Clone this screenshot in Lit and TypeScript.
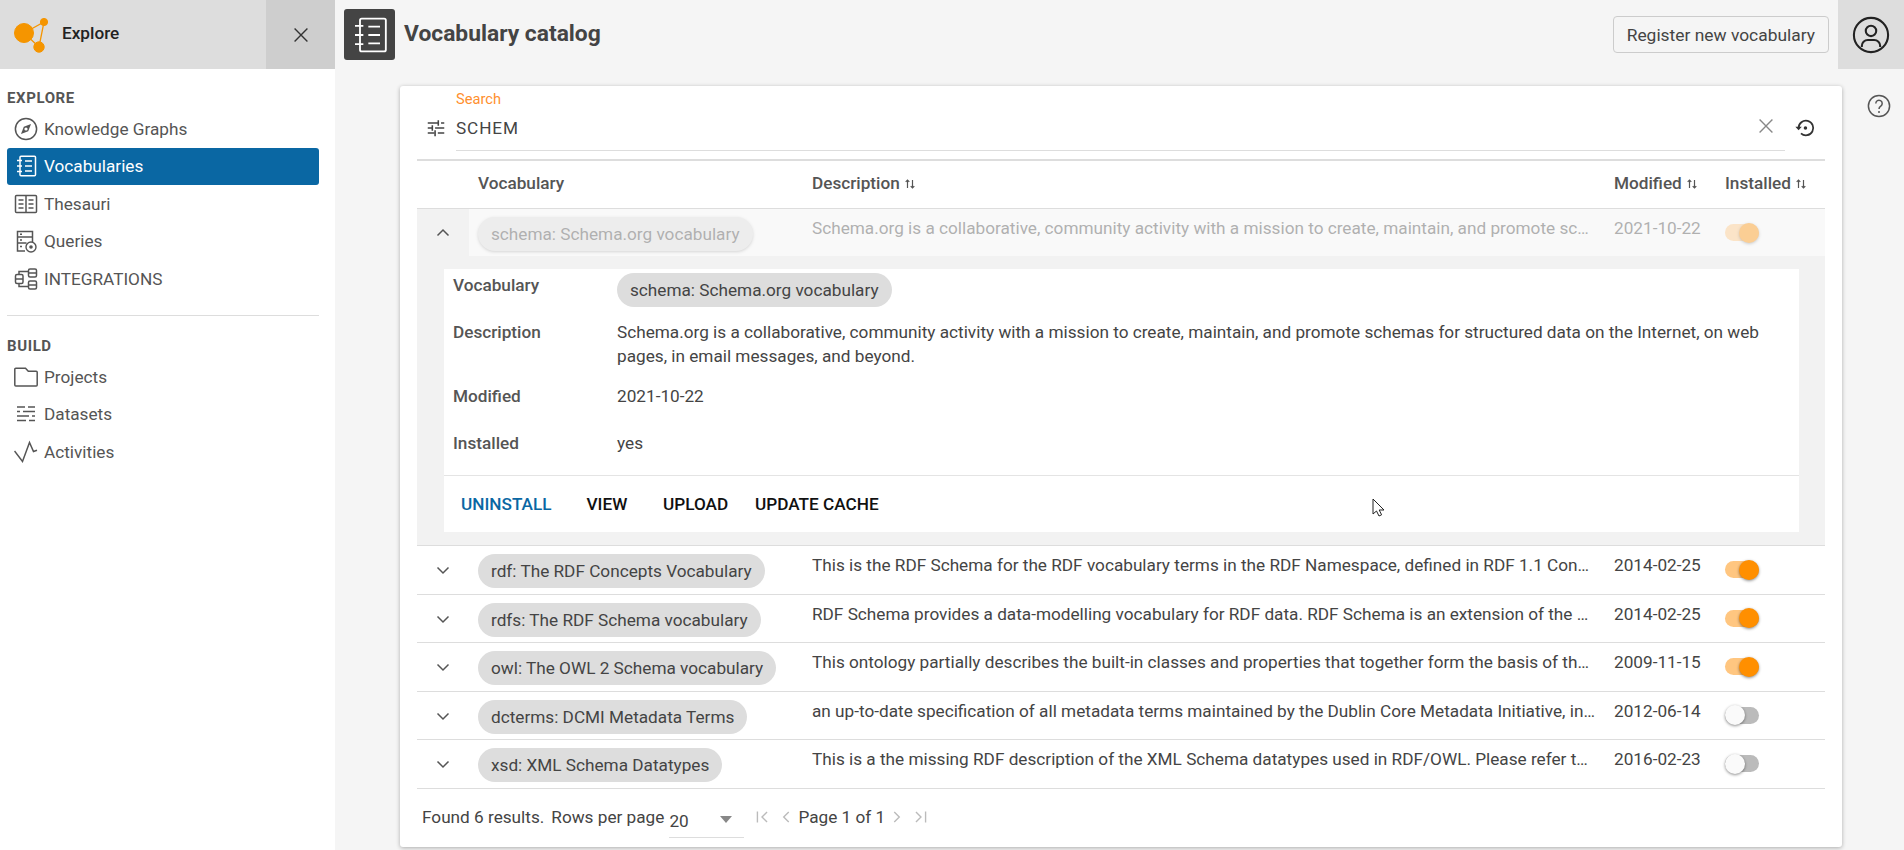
import { LitElement, html, css, svg } from 'lit';
import { customElement } from 'lit/decorators.js';

const stroke = (body: unknown, size = 24) => html`<svg class="icon" width=${size} height=${size} viewBox="0 0 24 24" fill="none" stroke="currentColor" stroke-width="1.5">${body}</svg>`;

const notebook = svg`<rect x="6" y="2.2" width="15.5" height="19.6" rx="1"/><path d="M3 6.5h5M3 12h5M3 17.5h5M11 7h7M11 12h7M11 17h7"/>`;
const compass = svg`<circle cx="12" cy="12" r="10.6"/><path d="M17 7l-2.8 7.2L7 17l2.8-7.2z" fill="currentColor" stroke="none"/><circle cx="12" cy="12" r="1.6" fill="#fff" stroke="none"/>`;
const book = svg`<rect x="1.5" y="3.5" width="21" height="17" rx="1"/><path d="M12 3.5v17M4.5 8h5M4.5 12h5M4.5 16h5M14.5 8h5M14.5 12h5M14.5 16h5"/>`;
const queries = svg`<path d="M11 22H3.5V2.5h15V13M3.5 8h15M3.5 14h9M6 5.2h2M6 11h2M6 17.5h2"/><circle cx="17" cy="18" r="5" stroke-width="1.4"/><circle cx="17" cy="18" r="1.8" fill="currentColor" stroke="none"/>`;
const integrations = svg`<rect x="1.5" y="7.5" width="7.5" height="9" rx="1.5"/><path d="M1.5 12H9"/><rect x="14.5" y="2" width="8" height="8" rx="1.5"/><path d="M14.5 6h8"/><rect x="14.5" y="14" width="8" height="8" rx="1.5"/><path d="M14.5 18h8M5 7.5V4.5h9.5M5 16.5v3h9.5"/>`;
const folder = svg`<path d="M.8 4.3a1 1 0 0 1 1-1h9.7l2.8 3h7.9a1 1 0 0 1 1 1V20a1 1 0 0 1-1 1H1.8a1 1 0 0 1-1-1z"/>`;
const datasets = svg`<path d="M3 5h8M14 5h7M3 9.5h3M9 9.5h12M3 14h12M18 14h3M3 18.5h9M15 18.5h6"/>`;
const activity = svg`<path d="M.5 11l8 10.5 7-19 4 9 3.5-1.2"/>`;
const tune = svg`<path d="M3 6.5h11M17.5 6.5H21M14.5 3.5v6M3 12h4.5M11 12h10M8 9v6M3 17.5h7M14 17.5h7M11 14.5v6.5" stroke-width="1.7"/>`;
const close = svg`<path d="M5 5l14 14M19 5L5 19"/>`;
const history = svg`<path d="M5 12a8 8 0 1 1 2.6 5.9" stroke-width="1.9"/><path d="M1.5 10.5h7L5 14.5z" fill="currentColor" stroke="none"/><circle cx="12.5" cy="12" r="1.9" fill="currentColor" stroke="none"/>`;
const help = svg`<circle cx="12" cy="12" r="10.6"/><path d="M8.8 9.4a3.2 3.2 0 1 1 5 2.7c-1.2.8-1.8 1.4-1.8 2.9"/><circle cx="12" cy="18" r="1" fill="currentColor" stroke="none"/>`;
const user = svg`<circle cx="12" cy="12" r="10.8" stroke-width="1.3"/><circle cx="12" cy="9.4" r="3.3" stroke-width="1.3"/><path d="M6.2 19.6v-.6a3.8 3.8 0 0 1 3.8-3.8h4a3.8 3.8 0 0 1 3.8 3.8v.6" stroke-width="1.3"/>`;
const chevronDown = svg`<path d="M6.5 9.5l5.5 5.5 5.5-5.5"/>`;
const chevronUp = svg`<path d="M6.5 14.5L12 9l5.5 5.5"/>`;

const sortIcon = html`<svg class="sort" width="12" height="12" viewBox="0 0 12 12" fill="none" stroke="currentColor" stroke-width="1.2"><path d="M3.5 10V2M1.7 3.8L3.5 2l1.8 1.8M8.5 2v8M6.7 8.2L8.5 10l1.8-1.8"/></svg>`;

const exploreItems = [
  { label: 'Knowledge Graphs', icon: compass },
  { label: 'Vocabularies', icon: notebook, active: true },
  { label: 'Thesauri', icon: book },
  { label: 'Queries', icon: queries },
  { label: 'INTEGRATIONS', icon: integrations },
];
const buildItems = [
  { label: 'Projects', icon: folder },
  { label: 'Datasets', icon: datasets },
  { label: 'Activities', icon: activity },
];

const schemaDesc = 'Schema.org is a collaborative, community activity with a mission to create, maintain, and promote schemas for structured data on the Internet, on web pages, in email messages, and beyond.';
const rows = [
  { name: 'rdf: The RDF Concepts Vocabulary', desc: 'This is the RDF Schema for the RDF vocabulary terms in the RDF Namespace, defined in RDF 1.1 Concepts and Abstract Syntax.', date: '2014-02-25', on: true },
  { name: 'rdfs: The RDF Schema vocabulary', desc: 'RDF Schema provides a data-modelling vocabulary for RDF data. RDF Schema is an extension of the basic RDF vocabulary.', date: '2014-02-25', on: true },
  { name: 'owl: The OWL 2 Schema vocabulary', desc: 'This ontology partially describes the built-in classes and properties that together form the basis of the RDF/XML syntax of OWL 2.', date: '2009-11-15', on: true },
  { name: 'dcterms: DCMI Metadata Terms', desc: 'an up-to-date specification of all metadata terms maintained by the Dublin Core Metadata Initiative, including properties and classes.', date: '2012-06-14', on: false },
  { name: 'xsd: XML Schema Datatypes', desc: 'This is a the missing RDF description of the XML Schema datatypes used in RDF/OWL. Please refer to the specification for details.', date: '2016-02-23', on: false },
];

@customElement('app-root')
export class AppRoot extends LitElement {
  static styles = css`
    :host {
      display: flex;
      width: 1904px;
      height: 850px;
      overflow: hidden;
      background: #f5f5f5;
      color: #444;
      font-family: Roboto, "Liberation Sans", sans-serif;
      font-size: 17.2px;
      line-height: 24px;
    }
    .icon { display: block; flex: none; }

    /* sidebar */
    .sidebar { width: 335px; flex: none; background: #fff; }
    .brand { display: flex; align-items: center; height: 69px; background: #ddd; }
    .logo { margin-left: 12px; flex: none; }
    .brand-name { flex: 1; margin-left: 14px; padding-bottom: 4px; font-weight: 500; color: #222; }
    .brand-close { display: flex; align-items: center; justify-content: center; width: 69px; height: 69px; background: #cecece; color: #333; }
    .nav { padding: 17px 16px 0 7px; }
    .nav-title { height: 24px; font-weight: 700; font-size: 15px; letter-spacing: 0.6px; color: #555; }
    .nav-item { display: flex; align-items: center; gap: 6px; height: 37.5px; padding-left: 7px; border-radius: 3px; color: #555; }
    .nav-item.active { background: #0a67a3; color: #fff; }
    .nav-sep { height: 1px; margin: 17.5px 0 18px; background: #ddd; }

    /* main */
    .main { flex: 1; min-width: 0; display: flex; flex-direction: column; }
    .topbar { display: flex; align-items: center; height: 69px; padding-left: 9px; }
    .page-icon { display: flex; align-items: center; justify-content: center; width: 51px; height: 51px; border-radius: 3px; background: #444; color: #fff; }
    .page-icon svg { stroke-width: 1.1; }
    .title { flex: 1; margin-left: 9px; padding-bottom: 2px; font-size: 22.8px; font-weight: 700; color: #444; }
    .register { height: 37px; padding: 0 13px; margin-right: 9px; border: 1px solid #ccc; border-radius: 4px; background: transparent; color: #444; font: inherit; font-size: 17.4px; }
    .user { display: flex; align-items: center; justify-content: center; width: 66px; height: 69px; background: #ddd; color: #222; }
    .body { display: flex; padding: 17px 0 0 65px; }
    .help { flex: 1; display: flex; justify-content: center; padding: 8px 0 0 12px; color: #555; }

    .card { position: relative; width: 1442px; height: 761px; flex: none; box-sizing: border-box; padding: 0 17px; background: #fff; border-radius: 3px; box-shadow: 0 1px 4px rgba(0, 0, 0, 0.3); }

    /* search */
    .search { display: flex; height: 75px; border-bottom: 2px solid #ddd; box-sizing: border-box; color: #444; }
    .search-tune { margin: 31px 0 0 8px; color: #444; }
    .search-field { position: relative; flex: 1; margin-left: 9px; height: 65px; box-sizing: border-box; border-bottom: 1px solid #ddd; }
    .search-label { display: block; padding-top: 3px; font-size: 14.7px; line-height: 20px; color: #ff8f2e; }
    .search-value { display: block; margin-top: 7px; letter-spacing: 0.9px; }
    .search-clear { position: absolute; right: 8px; top: 29px; color: #888; }
    .search-history { margin: 31px 9px 0 9px; color: #333; }

    /* table */
    .row { display: grid; grid-template-columns: 52px 343px 802px 111px 100px; box-sizing: border-box; height: 48.6px; border-bottom: 1px solid #ddd; }
    .row.head { height: 48px; padding-bottom: 4px; font-weight: 500; color: #555; align-items: center; }
    .row.head .chip-col { padding-left: 9px; padding-top: 0; }
    .sort { display: inline-block; vertical-align: -1px; color: #555; }
    .expander { display: flex; justify-content: center; padding-top: 12px; color: #555; }
    .chip-col { padding: 8px 0 0 9px; }
    .chip { display: inline-block; height: 34px; padding: 0 13px; border-radius: 17px; background: #ddd; color: #444; line-height: 34px; white-space: nowrap; }
    .desc { padding: 7px 17.5px 0 0; white-space: nowrap; overflow: hidden; text-overflow: ellipsis; }
    .date { padding-top: 7px; }
    .toggle-col { padding-top: 15px; }
    .toggle { position: relative; display: block; width: 34px; height: 17px; border-radius: 9px; background: #bbb; }
    .toggle::after { content: ""; position: absolute; top: -1.5px; left: 0; width: 20px; height: 20px; border-radius: 50%; background: #fafafa; box-shadow: 0 1px 3px rgba(0, 0, 0, 0.45); }
    .toggle.on { background: #ffc680; }
    .toggle.on::after { left: 14px; background: #ff8f00; }

    .row.open { background: #f9f9f9; height: 47px; border-bottom: none; }
    .row.open .expander { background: #f2f2f2; }
    .row.open .chip-col, .row.open .desc, .row.open .date, .row.open .toggle-col { opacity: 0.4; }
    .row.open .chip { box-shadow: 0 1px 3px rgba(0, 0, 0, 0.35); }

    .panel { box-sizing: border-box; height: 290px; padding: 13px 26px 13px 27px; background: #f2f2f2; border-bottom: 1px solid #ddd; }
    .panel-inner { height: 263px; background: #fff; }
    .facts { display: grid; grid-template-columns: 164px 1fr; grid-template-rows: 51px 64px 47px 44px; padding: 0 10px 0 9px; border-bottom: 1px solid #e4e4e4; }
    .fact-label { font-weight: 500; color: #555; }
    .fact-label.first { padding-top: 4px; }
    .fact-chip { padding-top: 4px; }
    .actions { display: flex; align-items: center; height: 56px; padding-left: 17px; font-weight: 500; color: #111; }
    .actions span:nth-child(1) { color: #0a67a3; width: 125.5px; }
    .actions span:nth-child(2) { width: 76.5px; }
    .actions span:nth-child(3) { width: 92px; }

    /* footer */
    .footer { display: flex; align-items: center; height: 58px; padding: 0 0 2px 5px; box-sizing: border-box; }
    .rpp { margin-left: 7px; }
    .select { position: relative; box-sizing: border-box; width: 75px; height: 40px; margin: 2px 0 0 5px; padding-top: 11px; border-bottom: 1px solid #ddd; }
    .select::after { content: ""; position: absolute; right: 12px; top: 18px; border: 6.5px solid transparent; border-top: 7px solid #888; border-bottom: 0; }
    .pager { display: flex; align-items: center; gap: 2px; margin-left: 7px; color: #bbb; }
    .pager .page { margin: 0 -1px 0 -1px; color: #444; white-space: nowrap; }

    .cursor { position: absolute; left: 972px; top: 412px; }
  `;

  private toggle(on: boolean) {
    return html`<span class="toggle ${on ? 'on' : ''}"></span>`;
  }

  private navItem(item: { label: string; icon: unknown; active?: boolean }) {
    return html`<div class="nav-item ${item.active ? 'active' : ''}">${stroke(item.icon)}<span>${item.label}</span></div>`;
  }

  render() {
    return html`
      <aside class="sidebar">
        <div class="brand">
          <svg class="logo" width="36" height="40" viewBox="0 0 36 40" fill="#f59500" stroke="#f59500">
            <path d="M12 18L32 7 27 32z" fill="none" stroke-width="1.3"/>
            <circle cx="12" cy="18" r="9.5"/>
            <circle cx="32" cy="7" r="3.6"/>
            <circle cx="27" cy="32" r="5.2"/>
          </svg>
          <span class="brand-name">Explore</span>
          <span class="brand-close">${stroke(close, 22)}</span>
        </div>
        <nav class="nav">
          <div class="nav-title">EXPLORE</div>
          ${exploreItems.map((i) => this.navItem(i))}
          <div class="nav-sep"></div>
          <div class="nav-title">BUILD</div>
          ${buildItems.map((i) => this.navItem(i))}
        </nav>
      </aside>
      <div class="main">
        <header class="topbar">
          <span class="page-icon">${stroke(notebook, 40)}</span>
          <span class="title">Vocabulary catalog</span>
          <button class="register">Register new vocabulary</button>
          <span class="user">${stroke(user, 38)}</span>
        </header>
        <div class="body">
          <section class="card">
            <div class="search">
              <span class="search-tune">${stroke(tune, 22)}</span>
              <div class="search-field">
                <span class="search-label">Search</span>
                <span class="search-value">SCHEM</span>
                <span class="search-clear">${stroke(close, 22)}</span>
              </div>
              <span class="search-history">${stroke(history, 22)}</span>
            </div>
            <div class="row head">
              <span></span>
              <span class="chip-col">Vocabulary</span>
              <span>Description ${sortIcon}</span>
              <span>Modified ${sortIcon}</span>
              <span>Installed ${sortIcon}</span>
            </div>
            <div class="row open">
              <span class="expander">${stroke(chevronUp)}</span>
              <span class="chip-col"><span class="chip">schema: Schema.org vocabulary</span></span>
              <span class="desc">${schemaDesc}</span>
              <span class="date">2021-10-22</span>
              <span class="toggle-col">${this.toggle(true)}</span>
            </div>
            <div class="panel">
              <div class="panel-inner">
                <div class="facts">
                  <span class="fact-label first">Vocabulary</span>
                  <span class="fact-chip"><span class="chip">schema: Schema.org vocabulary</span></span>
                  <span class="fact-label">Description</span>
                  <span>${schemaDesc}</span>
                  <span class="fact-label">Modified</span>
                  <span>2021-10-22</span>
                  <span class="fact-label">Installed</span>
                  <span>yes</span>
                </div>
                <div class="actions">
                  <span>UNINSTALL</span><span>VIEW</span><span>UPLOAD</span><span>UPDATE CACHE</span>
                </div>
              </div>
            </div>
            ${rows.map(
              (r) => html`
                <div class="row">
                  <span class="expander">${stroke(chevronDown)}</span>
                  <span class="chip-col"><span class="chip">${r.name}</span></span>
                  <span class="desc">${r.desc}</span>
                  <span class="date">${r.date}</span>
                  <span class="toggle-col">${this.toggle(r.on)}</span>
                </div>
              `
            )}
            <div class="footer">
              <span>Found 6 results.</span>
              <span class="rpp">Rows per page</span>
              <span class="select">20</span>
              <span class="pager">
                ${stroke(svg`<path d="M7 6v12M17.5 6.5L12 12l5.5 5.5"/>`, 22)}
                ${stroke(svg`<path d="M15 6.5L9.5 12l5.5 5.5"/>`, 22)}
                <span class="page">Page 1 of 1</span>
                ${stroke(svg`<path d="M9 6.5l5.5 5.5L9 17.5"/>`, 22)}
                ${stroke(svg`<path d="M17 6v12M6.5 6.5L12 12l-5.5 5.5"/>`, 22)}
              </span>
            </div>
            <svg class="cursor" width="14" height="20" viewBox="0 0 14 20"><path d="M1 1v15l3.5-3 2.5 5 2.6-1.2-2.4-4.8H12z" fill="#fff" stroke="#222" stroke-width="1"/></svg>
          </section>
          <div class="help">${stroke(help)}</div>
        </div>
      </div>
    `;
  }
}
